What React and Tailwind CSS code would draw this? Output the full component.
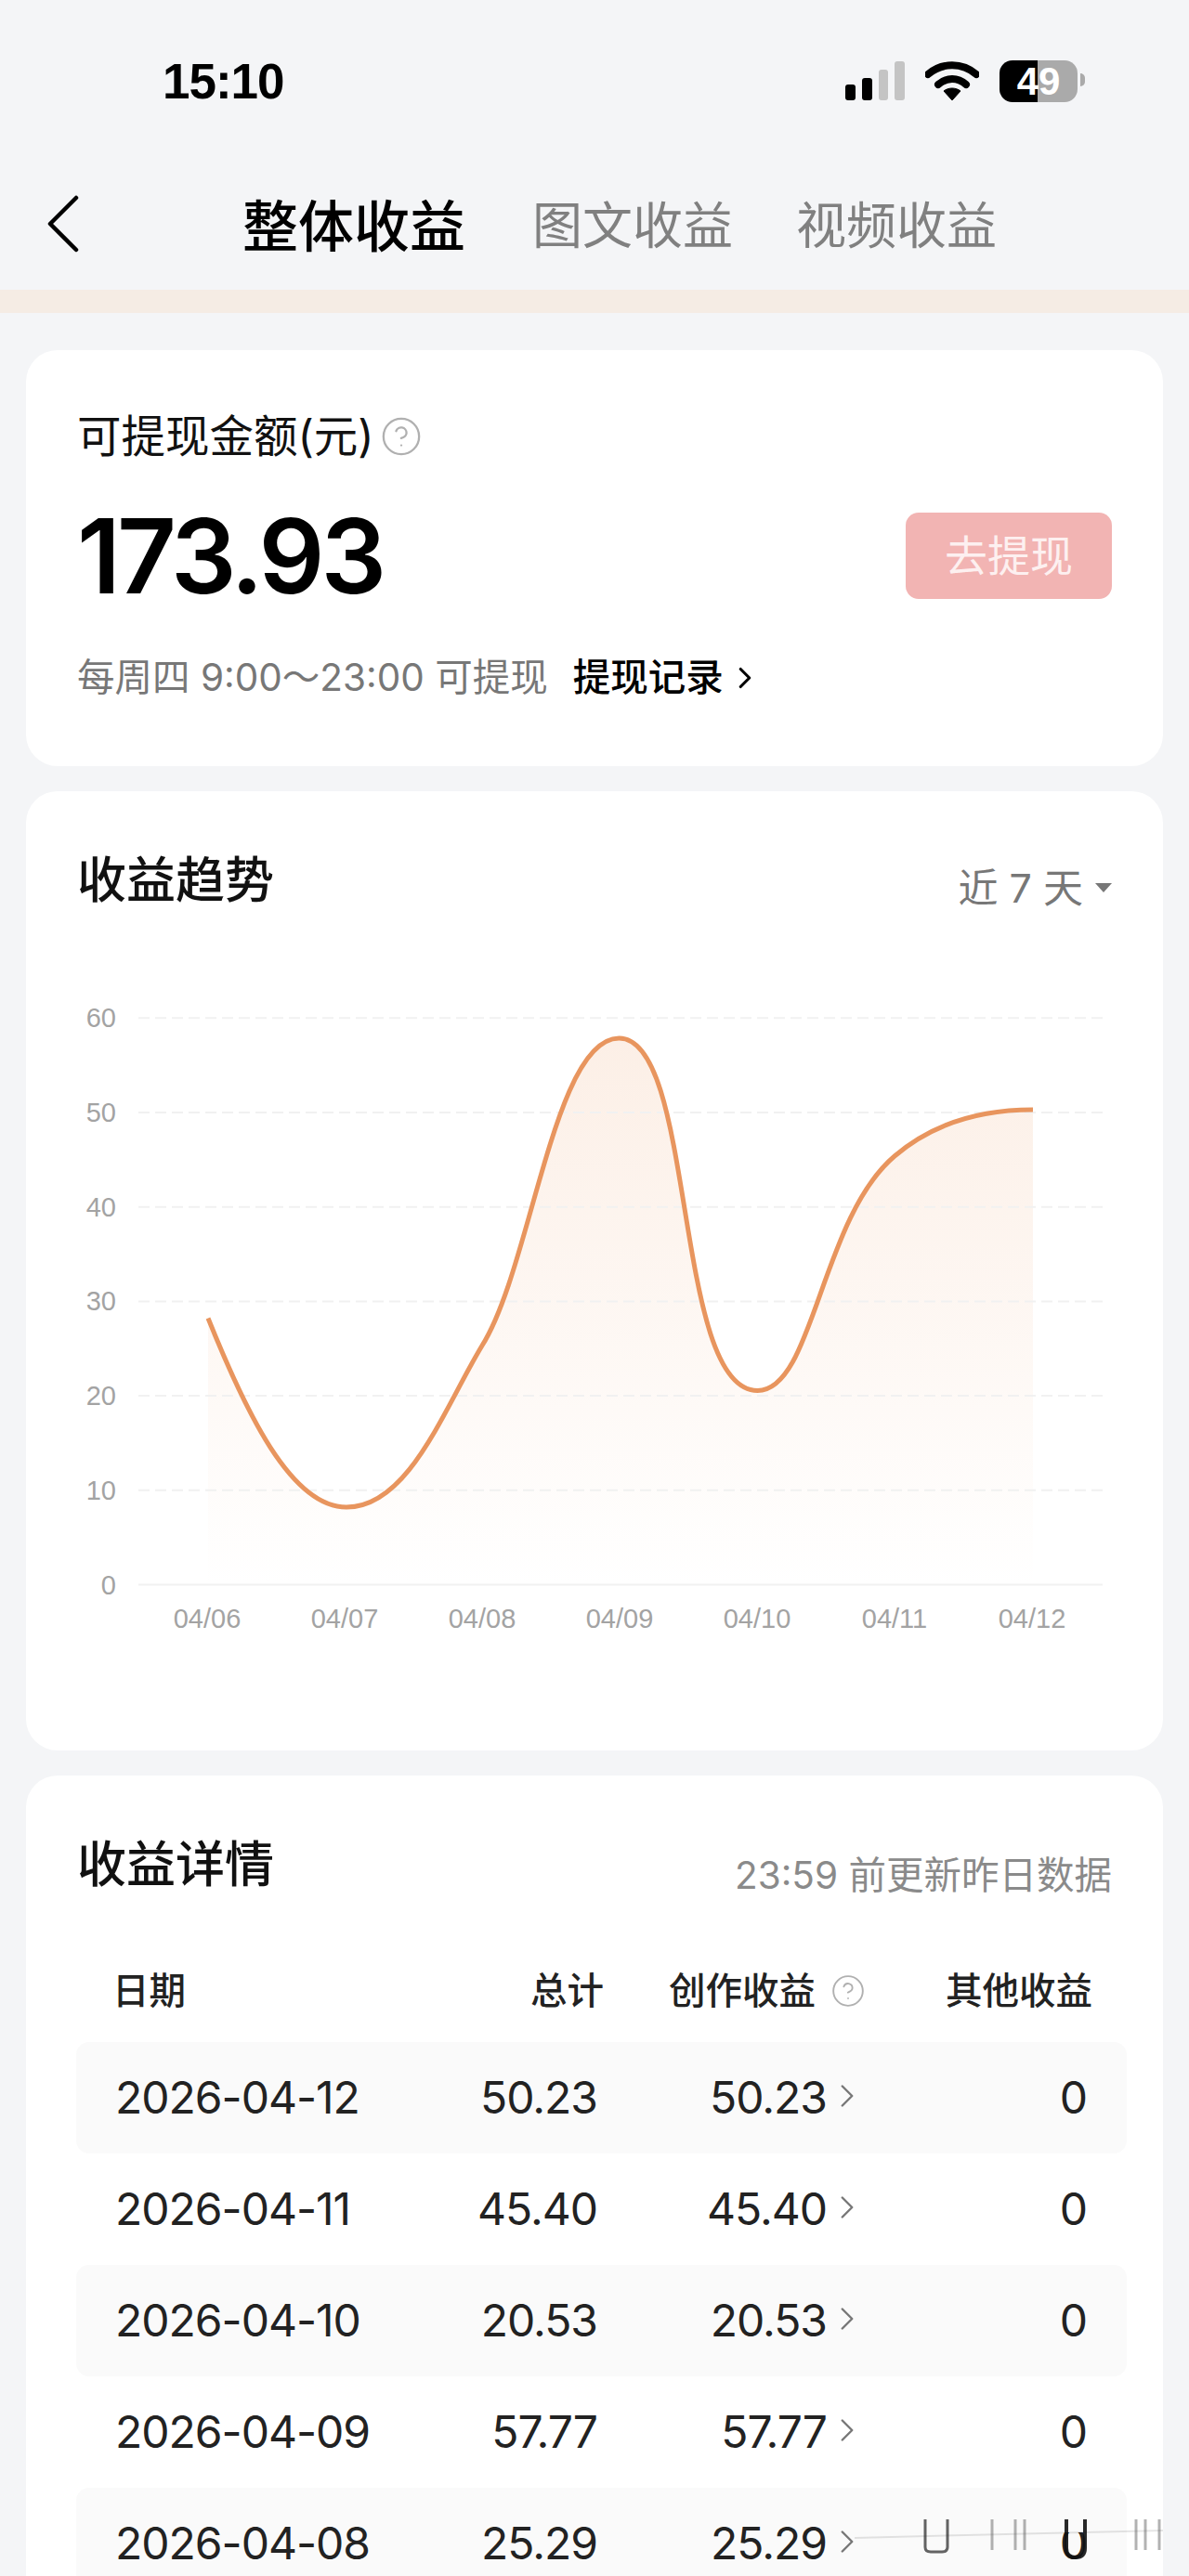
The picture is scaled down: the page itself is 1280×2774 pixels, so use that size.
import { CircleHelp, ChevronRight } from 'lucide-react';

const sans = 'font-["Inter","Noto_Sans_CJK_SC",sans-serif]';

const xLabels = ['04/06', '04/07', '04/08', '04/09', '04/10', '04/11', '04/12'];

const rows = [
  ['2026-04-12', '50.23', '50.23', '0'],
  ['2026-04-11', '45.40', '45.40', '0'],
  ['2026-04-10', '20.53', '20.53', '0'],
  ['2026-04-09', '57.77', '57.77', '0'],
  ['2026-04-08', '25.29', '25.29', '0'],
];

const xAt = (i) => 224 + i * 148;
const yAt = (v) => 1707.5 - v * 10.17;

// traced from the chart, one segment per day
const trendLine =
  'M224 1420.5 C264 1520 313 1624 373 1624 C440 1624 478 1518 519 1450 C572 1366 596 1119 666.5 1119 ' +
  'C749.5 1119 724.5 1498.5 815.5 1498.5 C876 1498.5 883 1314 963 1246 C1005 1210 1055 1196 1112 1196';

const StatusBar = () => (
  <div className="flex h-[132px] items-start justify-between pl-[175px] pr-[120px] pt-[58px]">
    <span className="font-['Liberation_Sans',sans-serif] text-[53px] font-bold leading-[60px] tracking-[-1px] text-black">15:10</span>
    <div className="mt-[7px] flex items-end gap-[22px]">
      <svg width="64" height="42" viewBox="0 0 64 42">
        <rect x="0" y="25" width="11" height="17" rx="3" fill="#000" />
        <rect x="18" y="18" width="11" height="24" rx="3" fill="#000" />
        <rect x="36" y="9" width="10" height="33" rx="3" fill="#c4c4c4" />
        <rect x="53" y="0" width="11" height="42" rx="3" fill="#c4c4c4" />
      </svg>
      <svg width="58" height="42" viewBox="0 0 58 42">
        <path d="M3 14 C18 1 40 1 55 14" fill="none" stroke="#000" strokeWidth="8" strokeLinecap="round" />
        <path d="M14 25 C23 17 35 17 44 25" fill="none" stroke="#000" strokeWidth="8" strokeLinecap="round" />
        <path d="M29 42 L20 32 C25 28 33 28 38 32 Z" fill="#000" strokeLinejoin="round" stroke="#000" strokeWidth="1" />
      </svg>
      <div className="relative mb-[-2px] flex h-[45px] w-[84px] overflow-hidden rounded-[14px]">
        <div className="h-full w-[41px] bg-black" />
        <div className="h-full flex-1 bg-[#aaaaaa]" />
        <span className="absolute inset-0 flex items-center justify-center font-['Liberation_Sans',sans-serif] text-[42px] font-bold leading-none text-white">49</span>
      </div>
    </div>
    <div className="absolute left-[1163px] top-[79px] h-[14px] w-[5px] rounded-r-full bg-[#aaaaaa]" />
  </div>
);

const NavBar = () => (
  <div className="flex h-[180px] items-start">
    <svg className="ml-[49px] mt-[78px]" width="36" height="62" viewBox="0 0 36 62">
      <path d="M33 3 L5 31 L33 59" fill="none" stroke="#000" strokeWidth="4.5" strokeLinecap="round" strokeLinejoin="round" />
    </svg>
    <div className={`${sans} ml-[176px] mt-[80px] text-[60px] font-medium leading-[64px] text-black`}>整体收益</div>
    <div className={`${sans} ml-[72px] mt-[84px] text-[54px] leading-[56px] text-[#808080]`}>图文收益</div>
    <div className={`${sans} ml-[68px] mt-[84px] text-[54px] leading-[56px] text-[#808080]`}>视频收益</div>
  </div>
);

const WithdrawCard = () => (
  <div className="rounded-[34px] bg-white px-[55px] pb-[70px] pt-[66px]">
    <div className="flex items-center">
      <span className={`${sans} text-[47.5px] leading-[54px] text-[#111]`}>可提现金额(元)</span>
      <CircleHelp className="ml-[6px] h-[46px] w-[46px] text-[#b0b0b0]" strokeWidth={1.2} />
    </div>
    <div className="mt-[55px] flex items-center justify-between">
      <span className="font-['Inter',sans-serif] text-[111px] font-semibold leading-[93px] tracking-[-4px] text-black">173.93</span>
      <div className={`${sans} flex h-[93px] w-[222px] items-center justify-center rounded-[14px] bg-[#f2b4b3] text-[46px] text-[#fdf0f0]`}>去提现</div>
    </div>
    <div className={`${sans} mt-[60px] flex items-center text-[40.5px] leading-[50px]`}>
      <span className="text-[#777]">每周四 9:00～23:00 可提现</span>
      <span className="ml-[27px] font-medium text-black">提现记录</span>
      <ChevronRight className="ml-[4px] h-[38px] w-[38px] text-black" strokeWidth={2} />
    </div>
  </div>
);

const TrendChart = () => {
  const area = `${trendLine} L1112 1707.5 L224 1707.5 Z`;
  return (
    <svg className="mt-[73px] block" width="1223" height="826" viewBox="28 1060 1223 826">
      <defs>
        <linearGradient id="areaFill" x1="0" y1="0" x2="0" y2="1">
          <stop offset="0" stopColor="#fcefe6" />
          <stop offset="1" stopColor="#ffffff" />
        </linearGradient>
      </defs>
      <path d={area} fill="url(#areaFill)" />
      {[60, 50, 40, 30, 20, 10].map((v) => (
        <line key={v} x1="149" x2="1187" y1={yAt(v)} y2={yAt(v)} stroke="#f1f1f1" strokeWidth="2" strokeDasharray="12 6" />
      ))}
      <line x1="149" x2="1187" y1="1707.5" y2="1707.5" stroke="#f1f1f1" strokeWidth="2" />
      <path d={trendLine} fill="none" stroke="#e8955e" strokeWidth="5" />
      {[60, 50, 40, 30, 20, 10, 0].map((v) => (
        <text key={v} x="125" y={yAt(v) + 10} textAnchor="end" fontFamily="Liberation Sans" fontSize="29" fill="#a3a3a3">{v}</text>
      ))}
      {xLabels.map((label, i) => (
        <text key={label} x={xAt(i) - 1} y="1754" textAnchor="middle" fontFamily="Liberation Sans" fontSize="29" fill="#a3a3a3">{label}</text>
      ))}
    </svg>
  );
};

const DetailTable = () => (
  <div className={`${sans} -ml-[1px] -mr-[16px] mt-[69px]`}>
    <div className="flex items-center whitespace-nowrap pl-[39px] text-[39.5px] font-medium leading-[50px] text-[#222]">
      <span className="w-[450px]">日期</span>
      <span className="w-[78px] text-right">总计</span>
      <span className="ml-[71px] w-[160px]">创作收益</span>
      <CircleHelp className="ml-[14px] h-[38px] w-[38px] text-[#b0b0b0]" strokeWidth={1.2} />
      <span className="ml-[86px] w-[158px]">其他收益</span>
    </div>
    <div className="mt-[30px]">
      {rows.map((row, i) => (
        <div key={row[0]} className={`grid h-[120px] grid-cols-[276px_243px_247px_30px_250px] items-center rounded-[14px] pl-[42px] font-['Inter',sans-serif] text-[48px] leading-[56px] tracking-[-1px] text-[#222] ${i % 2 === 0 ? 'bg-[#fafafa]' : 'bg-white'}`}>
          <span>{row[0]}</span>
          <span className="text-right">{row[1]}</span>
          <span className="text-right">{row[2]}</span>
          <ChevronRight className="ml-[1px] mt-[-4px] h-[42px] w-[42px] text-[#777]" strokeWidth={1.4} />
          <span className="text-right">{row[3]}</span>
        </div>
      ))}
    </div>
  </div>
);

// stretched watermark remains in the bottom right corner
const Watermark = () => (
  <svg className="absolute left-[920px] top-[2700px]" width="332" height="60" viewBox="0 0 332 60">
    <rect x="215" y="0" width="45" height="27" fill="#fafafa" />
    <path d="M0 33 L120 30 L332 25" fill="none" stroke="#000" strokeOpacity="0.1" strokeWidth="2" />
    <path d="M76 13 V43 Q76 48 82 48 H94 Q100 48 100 43 V13" fill="none" stroke="#222" strokeOpacity="0.7" strokeWidth="3" />
    <path d="M148 13 V46 M173 13 V46 M183 13 V46" stroke="#555" strokeOpacity="0.45" strokeWidth="3" />
    <path d="M228 13 V44 Q228 54 238 54 Q248 54 248 44 V13" fill="none" stroke="#111" strokeOpacity="0.9" strokeWidth="4" />
    <path d="M303 13 V46 M313 13 V46 M328 13 V46" stroke="#555" strokeOpacity="0.45" strokeWidth="3" />
  </svg>
);

export default function App() {
  return (
    <div className="relative h-[2774px] w-[1280px] overflow-hidden bg-[#f4f5f7]">
      <StatusBar />
      <NavBar />
      <div className="h-[25px] bg-[#f5ece4]" />
      <div className="flex flex-col gap-[27px] px-[28px] pt-[40px]">
        <WithdrawCard />
        <div className="rounded-[34px] bg-white pt-[66px]">
          <div className="flex items-start justify-between px-[55px]">
            <span className={`${sans} text-[53px] font-medium leading-[60px] text-[#111]`}>收益趋势</span>
            <div className={`${sans} mt-[8px] flex items-center text-[43px] leading-[60px] text-[#777]`}>
              <span>近 7 天</span>
              <span className="ml-[13px] h-0 w-0 border-x-[9px] border-t-[10px] border-x-transparent border-t-[#777]" />
            </div>
          </div>
          <TrendChart />
        </div>
        <div className="rounded-t-[34px] bg-white px-[55px] pt-[66px]">
          <div className="flex items-start justify-between">
            <span className={`${sans} text-[53px] font-medium leading-[60px] text-[#111]`}>收益详情</span>
            <span className={`${sans} mt-[12px] text-[40.5px] leading-[60px] text-[#8a8a8a]`}>23:59 前更新昨日数据</span>
          </div>
          <DetailTable />
        </div>
      </div>
      <Watermark />
    </div>
  );
}
